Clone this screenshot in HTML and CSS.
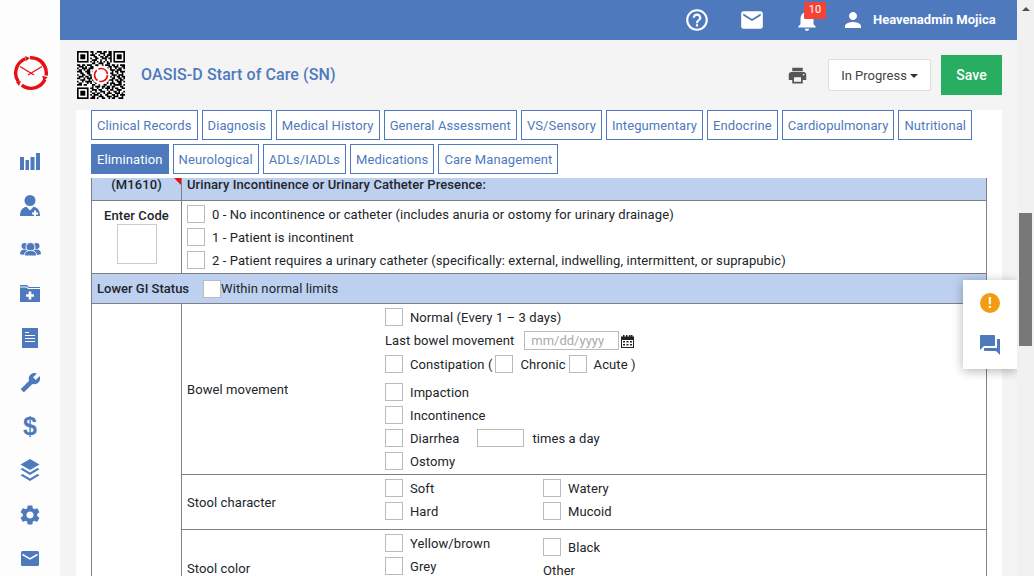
FILE: index.html
```html
<!DOCTYPE html>
<html lang="en">
<head>
<meta charset="utf-8">
<title>OASIS-D Start of Care (SN)</title>
<link rel="stylesheet" href="styles.css">
</head>
<body>
<aside class="sidebar">
  <div class="logo">
    <svg width="36" height="36" viewBox="0 0 36 36" fill="none" stroke="#e60f14">
      <circle cx="18" cy="18" r="15.300" stroke-width="3.400" stroke-dasharray="27.200 4.840" transform="rotate(25 18 18)"/>
      <path d="M7 11.500L21 20M29 11.500L15 20" stroke-width="1.300"/>
      <path d="M12 1l5 2-4 3zM34.500 22l-3.500 4-2-5zM3 27l5 -1 -2 5z" fill="#e60f14" stroke-width="0"/>
    </svg>
  </div>
  <nav class="nav">
    <a class="nav-item"><svg width="20" height="17" viewBox="0 0 20 17" fill="#4e7abd"><path d="M0 4h4v13H0zM5.500 7H9v10H5.500zM10.500 4h4v13h-4zM16 0h4v17h-4z"/></svg></a>
    <a class="nav-item"><svg width="20" height="21" viewBox="0 0 20 21" fill="#4e7abd"><circle cx="10" cy="5.500" r="5.500"/><path d="M0 21c0-5.500 2.500-8.500 6.500-9.200L10 15.500l3.500-3.700c4 .7 6.500 3.700 6.500 9.200z"/><path fill="#fff" d="M14 15.500h2v2h2v2h-2v2h-2v-2h-2v-2h2z"/></svg></a>
    <a class="nav-item"><svg width="21" height="14" viewBox="0 0 21 14" fill="#4e7abd"><circle cx="4.500" cy="4" r="3"/><circle cx="16.500" cy="4" r="3"/><path d="M0 12c0-3 1.500-4.500 4.500-4.500S9 9 9 12c0 1-9 1-9 0zM12 12c0-3 1.500-4.500 4.500-4.500S21 9 21 12c0 1-9 1-9 0z"/><circle cx="10.500" cy="5" r="4.500" stroke="#fdfdfd"/><path d="M4.500 14c0-4 2-5.500 6-5.500s6 1.500 6 5.500z" stroke="#fdfdfd"/></svg></a>
    <a class="nav-item"><svg width="20" height="17" viewBox="0 0 20 17" fill="#4e7abd"><path d="M0 0h7l2 2h11v1H8.500L7 1.500H0zM0 2.500h6.500L8 4h12v13H0z"/><path fill="#fff" d="M8.700 6.500h2.600v2.700H14v2.600h-2.700v2.700H8.700v-2.700H6V9.200h2.700z"/></svg></a>
    <a class="nav-item"><svg width="16" height="20" viewBox="0 0 16 20"><path fill="#4e7abd" d="M0 0h16v20H0z"/><path stroke="#fff" d="M3 4.500h4M3 7.500h10M3 10.500h10M3 13.500h10"/></svg></a>
    <a class="nav-item"><svg width="21" height="21" viewBox="0 0 24 24" fill="#4e7abd"><path transform="matrix(-1 0 0 1 24 0)" d="M22.700 19l-9.100-9.100c.9-2.300.4-5-1.500-6.900-2-2-5-2.400-7.400-1.300L9 6 6 9 1.600 4.700C.4 7.100.9 10.100 2.900 12.100c1.900 1.900 4.600 2.400 6.900 1.500l9.100 9.100c.4.4 1 .4 1.400 0l2.300-2.300c.5-.4.5-1.100.1-1.400z"/></svg></a>
    <a class="nav-item dollar">$</a>
    <a class="nav-item"><svg width="20" height="22" viewBox="0 0 20 22" fill="#4e7abd"><path d="M10 0l9.500 5.500L10 11 .5 5.500z"/><path d="M2.500 9l7.500 4.500L17.500 9l2 1.200L10 16 .5 10.200z"/><path d="M2.500 15l7.500 4.500 7.500-4.500 2 1.200L10 22 .5 16.200z"/></svg></a>
    <a class="nav-item"><svg width="24" height="24" viewBox="0 0 24 24" fill="#4e7abd"><path d="M19.140 12.940c.04-.3.06-.61.06-.94 0-.32-.02-.64-.07-.94l2.030-1.580c.18-.14.23-.41.12-.61l-1.920-3.320c-.12-.22-.37-.29-.59-.22l-2.390.96c-.5-.38-1.030-.7-1.620-.94l-.36-2.540c-.04-.24-.24-.41-.48-.41h-3.840c-.24 0-.43.17-.47.41l-.36 2.540c-.59.24-1.130.57-1.620.94l-2.390-.96c-.22-.08-.47 0-.59.22L2.740 8.870c-.12.21-.08.47.12.61l2.030 1.580c-.05.3-.09.63-.09.94s.02.64.07.94l-2.030 1.580c-.18.14-.23.41-.12.61l1.920 3.320c.12.22.37.29.59.22l2.390-.96c.5.38 1.030.7 1.620.94l.36 2.540c.05.24.24.41.48.41h3.840c.24 0 .44-.17.47-.41l.36-2.540c.59-.24 1.130-.56 1.620-.94l2.390.96c.22.08.47 0 .59-.22l1.920-3.320c.12-.22.07-.47-.12-.61l-2.010-1.580zM12 15.600c-1.980 0-3.600-1.620-3.600-3.600s1.620-3.600 3.600-3.600 3.600 1.620 3.600 3.600-1.620 3.600-3.600 3.600z"/></svg></a>
    <a class="nav-item"><svg width="18" height="15" viewBox="0 0 18 15"><rect width="18" height="15" rx="1.500" fill="#4e7abd"/><path d="M1.500 3.500L9 8l7.500-4.500" fill="none" stroke="#fff" stroke-width="1.500"/></svg></a>
  </nav>
</aside>

<div class="main">
  <header class="topbar">
    <svg class="top-icon" width="26" height="26" viewBox="0 0 24 24" fill="#fff"><path d="M11 18h2v-2h-2v2zm1-16C6.480 2 2 6.480 2 12s4.480 10 10 10 10-4.480 10-10S17.520 2 12 2zm0 18c-4.410 0-8-3.590-8-8s3.590-8 8-8 8 3.590 8 8-3.590 8-8 8zm0-14c-2.210 0-4 1.790-4 4h2c0-1.100.9-2 2-2s2 .9 2 2c0 2-3 1.750-3 5h2c0-2.250 3-2.500 3-5 0-2.210-1.790-4-4-4z"/></svg>
    <svg class="top-icon" width="26" height="26" viewBox="0 0 24 24" fill="#fff"><path d="M20 4H4c-1.100 0-1.990.9-1.990 2L2 18c0 1.100.9 2 2 2h16c1.100 0 2-.9 2-2V6c0-1.100-.9-2-2-2zm0 4l-8 5-8-5V6l8 5 8-5v2z"/></svg>
    <div class="bell">
      <svg width="26" height="26" viewBox="0 0 24 24" fill="#fff"><path d="M12 22c1.100 0 2-.9 2-2h-4c0 1.100.89 2 2 2zm6-6v-5c0-3.070-1.640-5.640-4.500-6.320V4c0-.83-.67-1.500-1.500-1.500s-1.500.67-1.500 1.500v.68C7.630 5.360 6 7.920 6 11v5l-2 2v1h16v-1l-2-2z"/></svg>
      <span class="badge">10</span>
    </div>
    <div class="user">
      <svg width="24" height="24" viewBox="0 0 24 24" fill="#fff"><path d="M12 12c2.210 0 4-1.790 4-4s-1.790-4-4-4-4 1.790-4 4 1.790 4 4 4zm0 2c-2.670 0-8 1.340-8 4v2h16v-2c0-2.660-5.330-4-8-4z"/></svg>
      <span class="user-name">Heavenadmin Mojica</span>
    </div>
  </header>

  <section class="titlebar">
    <svg class="qr" width="48" height="48" viewBox="0 0 29 29">
      <rect width="29" height="29" fill="#fff"/>
      <g fill="none" stroke="#000">
        <rect x=".5" y=".5" width="6" height="6"/><rect x="22.500" y=".5" width="6" height="6"/><rect x=".5" y="22.500" width="6" height="6"/>
        <path d="M8 .5h2M12 .5h3M16 .5h2M19 .5h2M9 1.500h1M11 1.500h1M14 1.500h3M19 1.500h2M8 2.500h3M13 2.500h1M16 2.500h1M18 2.500h3M10 3.500h2M14 3.500h2M17 3.500h2M20 3.500h1M8 4.500h1M11 4.500h2M15 4.500h3M19 4.500h2M9 5.500h3M14 5.500h1M17 5.500h1M20 5.500h1M8 6.500h1M10 6.500h1M12 6.500h1M14 6.500h1M16 6.500h1M18 6.500h1M20 6.500h1M9 7.500h2M13 7.500h3M18 7.500h2"/>
        <path d="M0 8.500h2M3 8.500h2M6 8.500h3M11 8.500h2M15 8.500h1M17 8.500h3M21 8.500h2M24 8.500h1M26 8.500h3M1 9.500h3M5 9.500h1M8 9.500h2M12 9.500h4M19 9.500h2M22 9.500h3M27 9.500h2M0 10.500h1M3 10.500h3M7 10.500h3M18 10.500h1M20 10.500h1M23 10.500h1M25 10.500h2M28 10.500h1M1 11.500h2M4 11.500h1M6 11.500h2M20 11.500h3M24 11.500h3M0 12.500h3M5 12.500h3M9 12.500h1M21 12.500h1M23 12.500h2M26 12.500h3M2 13.500h2M6 13.500h2M20 13.500h2M24 13.500h1M27 13.500h1M0 14.500h1M3 14.500h2M7 14.500h2M21 14.500h3M25 14.500h3M1 15.500h3M5 15.500h2M8 15.500h1M20 15.500h1M22 15.500h1M24 15.500h2M27 15.500h2M0 16.500h2M4 16.500h1M6 16.500h3M21 16.500h2M25 16.500h2M28 16.500h1M2 17.500h3M7 17.500h1M9 17.500h2M19 17.500h3M23 17.500h2M26 17.500h2M0 18.500h1M3 18.500h1M5 18.500h4M10 18.500h3M16 18.500h3M21 18.500h1M24 18.500h3M28 18.500h1M1 19.500h2M6 19.500h1M8 19.500h1M11 19.500h1M13 19.500h4M18 19.500h1M20 19.500h3M25 19.500h2M0 20.500h3M4 20.500h2M9 20.500h2M13 20.500h1M16 20.500h2M20 20.500h1M22 20.500h5M28 20.500h1"/>
        <path d="M9 21.500h1M11 21.500h3M15 21.500h2M18 21.500h2M21 21.500h2M26 21.500h2M8 22.500h2M12 22.500h1M15 22.500h1M17 22.500h3M21 22.500h1M23 22.500h2M27 22.500h2M9 23.500h3M13 23.500h2M18 23.500h1M20 23.500h2M24 23.500h3M8 24.500h1M11 24.500h1M14 24.500h3M19 24.500h1M22 24.500h2M25 24.500h1M28 24.500h1M9 25.500h2M12 25.500h2M16 25.500h1M18 25.500h3M23 25.500h3M27 25.500h1M8 26.500h1M10 26.500h3M14 26.500h1M17 26.500h2M21 26.500h2M24 26.500h1M26 26.500h3M9 27.500h2M13 27.500h3M18 27.500h3M22 27.500h3M27 27.500h1M8 28.500h3M12 28.500h1M15 28.500h2M19 28.500h1M21 28.500h2M25 28.500h3"/>
      </g>
      <rect x="2" y="2" width="3" height="3"/><rect x="24" y="2" width="3" height="3"/><rect x="2" y="24" width="3" height="3"/>
      <circle cx="14.500" cy="14.500" r="5.700" fill="#fff"/>
      <circle cx="14.500" cy="14.500" r="3.900" fill="none" stroke="#e60f14" stroke-width="1" stroke-dasharray="7 1.170"/>
    </svg>
    <h1 class="title">OASIS-D Start of Care (SN)</h1>
    <div class="actions">
      <svg class="print" width="21" height="21" viewBox="0 0 24 24" fill="#555"><path d="M19 8H5c-1.660 0-3 1.340-3 3v6h4v4h12v-4h4v-6c0-1.660-1.340-3-3-3zm-3 11H8v-5h8v5zm3-7c-.55 0-1-.45-1-1s.45-1 1-1 1 .45 1 1-.45 1-1 1zm-1-9H6v4h12V3z"/></svg>
      <button class="status">In Progress<span class="caret"></span></button>
      <button class="save">Save</button>
    </div>
  </section>

  <section class="panel">
    <div class="tabs">
      <a class="tab">Clinical Records</a><a class="tab">Diagnosis</a><a class="tab">Medical History</a><a class="tab">General Assessment</a><a class="tab">VS/Sensory</a><a class="tab">Integumentary</a><a class="tab">Endocrine</a><a class="tab">Cardiopulmonary</a><a class="tab">Nutritional</a><a class="tab active">Elimination</a><a class="tab">Neurological</a><a class="tab">ADLs/IADLs</a><a class="tab">Medications</a><a class="tab">Care Management</a>
    </div>
    <table class="form">
      <colgroup><col class="c1"><col class="c2"><col class="c3"></colgroup>
      <tr class="head r-m">
        <th class="code">(M1610)<span class="flag"></span></th>
        <th colspan="2" class="left">Urinary Incontinence or Urinary Catheter Presence:</th>
      </tr>
      <tr class="r-enter">
        <th class="enter">Enter Code<input class="code-box" type="text"></th>
        <td colspan="2" class="opts">
          <label class="opt"><input class="box" type="checkbox">0 - No incontinence or catheter (includes anuria or ostomy for urinary drainage)</label>
          <label class="opt"><input class="box" type="checkbox">1 - Patient is incontinent</label>
          <label class="opt"><input class="box" type="checkbox">2 - Patient requires a urinary catheter (specifically: external, indwelling, intermittent, or suprapubic)</label>
        </td>
      </tr>
      <tr class="head r-gi">
        <td colspan="3"><div class="gi"><b class="gi-label">Lower GI Status</b><input class="box flush" type="checkbox">Within normal limits</div></td>
      </tr>
      <tr class="r-bowel">
        <td class="blank" rowspan="3"></td>
        <td class="label">Bowel movement</td>
        <td class="opts">
          <label class="opt"><input class="box" type="checkbox">Normal (Every 1 – 3 days)</label>
          <div class="opt date-row">Last bowel movement<input class="date" type="text" placeholder="mm/dd/yyyy">
            <svg class="cal" width="13" height="13" viewBox="0 0 13 13" fill="#222"><path d="M2 0h1.500v1.500h1.500V0h1.500v1.500H8V0h1.500v1.500H10V0h1.500v1.500H13V13H0V1.500h2zM1 5v7h11V5z"/><path d="M2 6h2v1.500H2zM5.500 6h2v1.500h-2zM9 6h2v1.500H9zM2 9h2v1.500H2zM5.500 9h2v1.500h-2zM9 9h2v1.500H9z"/></svg>
          </div>
          <div class="opt gap-after"><input class="box" type="checkbox">Constipation (<input class="box inner" type="checkbox">Chronic<input class="box inner" type="checkbox">Acute )</div>
          <label class="opt"><input class="box" type="checkbox">Impaction</label>
          <label class="opt"><input class="box" type="checkbox">Incontinence</label>
          <div class="opt"><input class="box" type="checkbox">Diarrhea<input class="times" type="text">times a day</div>
          <label class="opt"><input class="box" type="checkbox">Ostomy</label>
        </td>
      </tr>
      <tr class="r-char">
        <td class="label">Stool character</td>
        <td class="opts">
          <div class="two">
            <label class="opt"><input class="box" type="checkbox">Soft</label>
            <label class="opt"><input class="box" type="checkbox">Watery</label>
            <label class="opt"><input class="box" type="checkbox">Hard</label>
            <label class="opt"><input class="box" type="checkbox">Mucoid</label>
          </div>
        </td>
      </tr>
      <tr class="r-color">
        <td class="label">Stool color</td>
        <td class="opts">
          <div class="two">
            <div>
              <label class="opt"><input class="box" type="checkbox">Yellow/brown</label>
              <label class="opt"><input class="box" type="checkbox">Grey</label>
            </div>
            <div class="col-shift">
              <label class="opt"><input class="box" type="checkbox">Black</label>
              <div class="other">Other</div>
            </div>
          </div>
        </td>
      </tr>
    </table>
  </section>

  <aside class="float">
    <span class="alert">!</span>
    <svg width="24" height="24" viewBox="0 0 24 24" fill="#4e7abd"><path d="M21 6h-2v9H6v2c0 .55.45 1 1 1h11l4 4V7c0-.55-.45-1-1-1zm-4 6V3c0-.55-.45-1-1-1H3c-.55 0-1 .45-1 1v14l4-4h10c.55 0 1-.45 1-1z"/></svg>
  </aside>
</div>

<div class="scrollbar"><span class="arrow"></span><span class="thumb"></span></div>
</body>
</html>
```
FILE: styles.css
```css
* { box-sizing: border-box; }
html, body { height: 100%; }
body {
  margin: 0;
  display: flex;
  height: 576px;
  overflow: hidden;
  font: 13px/18px Roboto, "Liberation Sans", sans-serif;
  letter-spacing: .09px;
  color: #212529;
  background: #fff;
}

/* sidebar */
.sidebar { width: 60px; flex: none; background: #fdfdfd; display: flex; flex-direction: column; align-items: center; }
.logo { margin-top: 55px; height: 84px; margin-left: 2px; flex: none; }
.logo svg { display: block; }
.nav { display: flex; flex-direction: column; width: 100%; }
.nav-item { height: 44.200px; display: flex; align-items: center; justify-content: center; flex: none; }
.dollar { font: bold 25px "Liberation Sans", sans-serif; color: #4e7abd; }

/* main */
.main { width: 957px; flex: none; display: flex; flex-direction: column; background: #f4f4f4; position: relative; overflow: hidden; }
.topbar { height: 40px; flex: none; background: #4e7abd; display: flex; align-items: center; color: #fff; padding-left: 624px; }
.top-icon { flex: none; margin-right: 29px; }
.bell { position: relative; width: 26px; height: 26px; margin-right: 21px; }
.bell svg { display: block; }
.badge { position: absolute; left: 10px; top: -5px; width: 22px; height: 17px; background: #f44336; color: #fff; font-size: 11px; line-height: 16px; text-align: center; border-radius: 1px; }
.user { display: flex; align-items: center; gap: 8px; }
.user-name { font-weight: 700; font-size: 13px; white-space: nowrap; letter-spacing: 0; }

.titlebar { height: 70px; flex: none; display: flex; align-items: center; padding: 0 15px 0 17px; }
.qr { flex: none; }
.title { margin: 0 0 0 16px; font-size: 16px; font-weight: 500; color: #4e7abd; line-height: 20px; }
.actions { margin-left: auto; display: flex; align-items: center; }
.print { margin-right: 20px; }
.status { width: 103px; height: 32px; background: #fff; border: 1px solid #ddd; border-radius: 2px; font: 13px Roboto, sans-serif; color: #444; padding: 0; margin-right: 10px; }
.caret { display: inline-block; border: 4px solid transparent; border-top-color: #333; border-bottom: 0; margin-left: 3px; vertical-align: 2px; }
.save { width: 61px; height: 40px; background: #27ae60; border: 0; color: #fff; font: 500 14px Roboto, sans-serif; padding: 0; }

.panel { flex: 1; margin: 0 15px 0 16px; padding: 0 15px; background: #fff; overflow: hidden; min-height: 0; }
.tabs { display: flex; flex-wrap: wrap; gap: 4px; height: 68px; align-content: flex-start; }
.tab { height: 30px; padding: 0 5px; border: 1px solid #4e7abd; color: #4e7abd; line-height: 29px; white-space: nowrap; }
.tab:nth-child(-n+9) { letter-spacing: .105px; }
.tab.active { background: #4e7abd; color: #fff; }

/* form table */
.form { width: 896px; table-layout: fixed; border-collapse: separate; border-spacing: 0; border-left: 1px solid #808080; border-right: 1px solid #808080; }
.c1 { width: 90px; }
.c2 { width: 198px; }
.form th, .form td { padding: 0; border-bottom: 1px solid #808080; font-weight: 400; text-align: left; vertical-align: top; }
.form th { font-weight: 500; }
.head th, .head td { background: #bdd0f0; }
.r-m { height: 23px; }
.r-m th { vertical-align: top; line-height: 14px; }
.r-m th.code { position: relative; text-align: center; border-right: 1px solid #808080; font-weight: 500; }
th.left { padding-left: 5px; }
.flag { position: absolute; right: 0; top: 0; border-top: 7px solid #e60f14; border-left: 7px solid transparent; }
.r-enter th.enter { text-align: center; border-right: 1px solid #808080; padding-top: 6px; }
.code-box { display: block; width: 40px; height: 40px; margin: -1px auto 0; border: 1px solid #ccc; background: #fff; }
.opts { padding: 4px 0 0 5px !important; }
.opt { display: flex; align-items: center; min-height: 20px; margin-bottom: 3px; white-space: nowrap; }
.opt:last-child { margin-bottom: 0; }
.box { appearance: none; width: 18px; height: 18px; flex: none; margin: 0 7px 2px 0; border: 1px solid #bbb; background: #fff; }
.box.inner { margin: 0 8px 2px 2px; }
.box.inner + .box.inner { margin: 0 7px 2px 3px; }
.date-row { margin-bottom: 4px; }
.gap-after { margin-bottom: 8px; }
.date { width: 95px; height: 19px; margin: 0 0 1px 10px; border: 1px solid #bbb; padding: 0 6px; font: 13px Roboto, sans-serif; }
.date::placeholder { color: #aaa; opacity: 1; }
.cal { margin-left: 2px; }
.times { width: 47px; height: 18px; margin: 0 8px 2px 18px; border: 1px solid #bbb; }
.gi { display: flex; align-items: center; height: 29px; padding-left: 5px; }
.gi-label { font-weight: 500; margin-right: 14px; letter-spacing: 0; }
.box.flush { margin: 0; }
.r-enter { height: 73px; }
.r-gi { height: 30px; }
.r-bowel { height: 171px; }
.r-char { height: 55px; }
.r-color { height: 77px; }
td.blank { border-right: 1px solid #808080; }
td.label { padding: 2px 0 0 5px; vertical-align: middle; }
.two { display: grid; grid-template-columns: 158px 1fr; align-items: start; }
.two > .opt:nth-child(-n+2) { margin-bottom: 3px; }
.two > div > .opt { margin-bottom: 3px; }
.col-shift { padding-top: 4px; }
.other { padding-top: 1px; }

/* floating panel */
.float { position: absolute; right: 0; top: 280px; width: 54px; height: 89px; background: #fff; box-shadow: 0 2px 10px rgba(0,0,0,.3); display: flex; flex-direction: column; align-items: center; padding-top: 13px; gap: 20px; }
.alert { width: 20px; height: 20px; border-radius: 50%; background: #f39c12; color: #fff; font: bold 14px/20px Roboto, sans-serif; text-align: center; }

/* scrollbar */
.scrollbar { width: 17px; flex: none; background: #f1f1f1; display: flex; flex-direction: column; align-items: center; }
.arrow { margin-top: 7px; border: 4px solid transparent; border-bottom-color: #505050; border-top: 0; }
.thumb { width: 13px; height: 133px; margin-top: 202px; background: #787878; }
```
